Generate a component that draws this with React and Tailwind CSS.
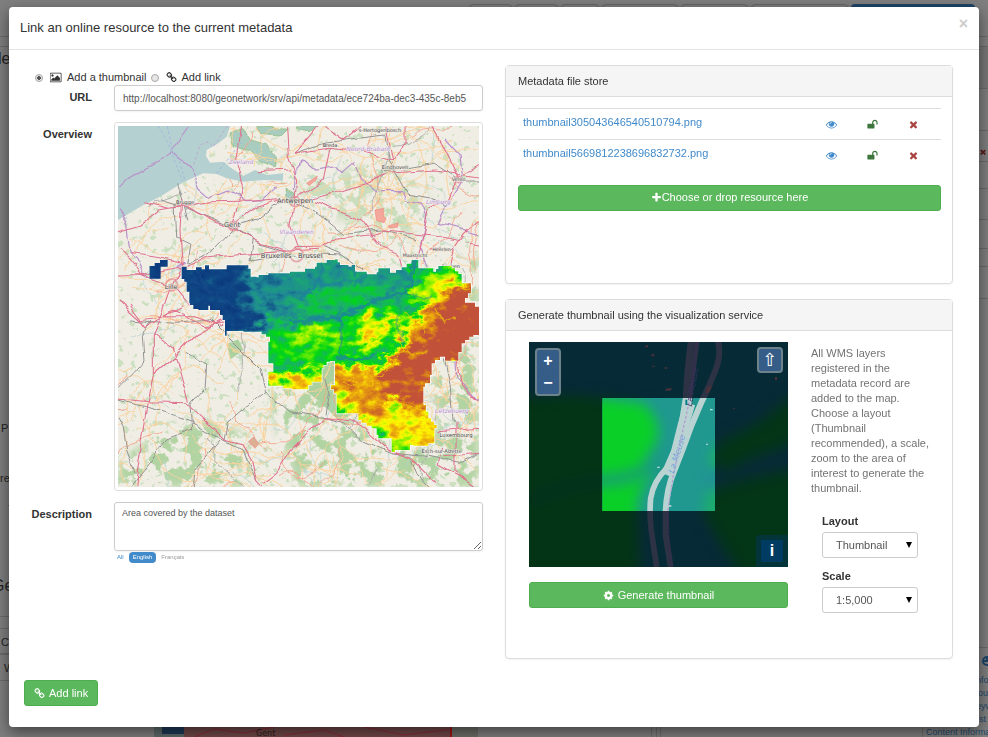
import { useState } from "react";

const ICONS = {
  times:
    "M1490 1322q0 40-28 68l-136 136q-28 28-68 28t-68-28l-294-294-294 294q-28 28-68 28t-68-28l-136-136q-28-28-28-68t28-68l294-294-294-294q-28-28-28-68t28-68l136-136q28-28 68-28t68 28l294 294 294-294q28-28 68-28t68 28l136 136q28 28 28 68t-28 68l-294 294 294 294q28 28 28 68z",
  eye: "M1664 960q-152-236-381-353 61 104 61 225 0 185-131.5 316.5t-316.5 131.5-316.5-131.5-131.5-316.5q0-121 61-225-229 117-381 353 133 205 333.5 326.5t434.5 121.5 434.5-121.5 333.5-326.5zm-720-384q0-20-14-34t-34-14q-125 0-214.5 89.5t-89.5 214.5q0 20 14 34t34 14 34-14 14-34q0-86 61-147t147-61q20 0 34-14t14-34zm848 384q0 34-20 69-140 230-376.5 368.5t-499.5 138.5-499.5-139-376.5-368q-20-35-20-69t20-69q140-229 376.5-368t499.5-139 499.5 139 376.5 368q20 35 20 69z",
  plus: "M1600 736v192q0 40-28 68t-68 28h-416v416q0 40-28 68t-68 28h-192q-40 0-68-28t-28-68v-416h-416q-40 0-68-28t-28-68v-192q0-40 28-68t68-28h416v-416q0-40 28-68t68-28h192q40 0 68 28t28 68v416h416q40 0 68 28t28 68z",
  cog: "M1152 896q0-106-75-181t-181-75-181 75-75 181 75 181 181 75 181-75 75-181zm512-109v222q0 12-8 23t-20 13l-185 28q-19 54-39 91 35 50 107 138 10 12 10 25t-9 23q-27 37-99 108t-94 71q-12 0-26-9l-138-108q-44 23-91 38-16 136-29 186-7 28-36 28h-222q-14 0-24.5-8.5t-11.5-21.5l-28-184q-49-16-90-37l-141 107q-10 9-25 9-14 0-25-11-126-114-165-168-7-10-7-23 0-12 8-23 15-21 51-66.5t54-70.5q-27-50-41-99l-183-27q-13-2-21-12.5t-8-23.5v-222q0-12 8-23t19-13l186-28q14-46 39-92-40-57-107-138-10-12-10-24 0-10 9-23 26-36 98.5-107.5t94.5-71.5q13 0 26 10l138 107q44-23 91-38 16-136 29-186 7-28 36-28h222q14 0 24.5 8.5t11.5 21.5l28 184q49 16 90 37l142-107q9-9 24-9 13 0 25 10 129 119 165 170 7 8 7 22 0 12-8 23-15 21-51 66.5t-54 70.5q26 50 41 98l183 28q13 2 21 12.5t8 23.5z",
  unlock:
    "M1728 576v256q0 26-19 45t-45 19h-64q-26 0-45-19t-19-45v-256q0-106-75-181t-181-75-181 75-75 181v192h96q40 0 68 28t28 68v576q0 40-28 68t-68 28h-960q-40 0-68-28t-28-68v-576q0-40 28-68t68-28h672v-192q0-185 131.5-316.5t316.5-131.5 316.5 131.5 131.5 316.5z",
  picture:
    "M576 576q0 80-56 136t-136 56-136-56-56-136 56-136 136-56 136 56 56 136zm1024 384v448h-1408v-192l320-320 160 160 512-512zm96-704h-1600q-13 0-22.5 9.5t-9.5 22.5v1216q0 13 9.5 22.5t22.5 9.5h1600q13 0 22.5-9.5t9.5-22.5v-1216q0-13-9.5-22.5t-22.5-9.5zm160 32v1216q0 66-47 113t-113 47h-1600q-66 0-113-47t-47-113v-1216q0-66 47-113t113-47h1600q66 0 113 47t47 113z",
  link: "M1520 1216q0-40-28-68l-208-208q-28-28-68-28-42 0-72 32 3 3 19 18.5t21.5 21.5 15 19 13 25.5 3.5 27.5q0 40-28 68t-68 28q-15 0-27.5-3.5t-25.5-13-19-15-21.5-21.5-18.5-19q-33 31-33 73 0 40 28 68l206 207q27 27 68 27 40 0 68-26l147-146q28-28 28-67zm-703-705q0-40-28-68l-206-207q-28-28-68-28-39 0-68 27l-147 146q-28 28-28 67 0 40 28 68l208 208q27 27 68 27 42 0 72-31-3-3-19-18.5t-21.5-21.5-15-19-13-25.5-3.5-27.5q0-40 28-68t68-28q15 0 27.5 3.5t25.5 13 19 15 21.5 21.5 18.5 19q33-31 33-73zm895 705q0 120-85 203l-147 146q-83 83-203 83-121 0-204-85l-206-207q-83-83-83-203 0-123 88-209l-88-88q-86 88-208 88-120 0-204-84l-208-208q-84-84-84-204t85-203l147-146q83-83 203-83 121 0 204 85l206 207q83 83 83 203 0 123-88 209l88 88q86-88 208-88 120 0 204 84l208 208q84 84 84 204z",
};

function Icon({ name, className }) {
  const wide = name === "picture";
  return (
    <svg viewBox={wide ? "0 0 1920 1792" : "0 0 1792 1792"} className={className} fill="currentColor" aria-hidden="true">
      <path d={ICONS[name]} />
    </svg>
  );
}

// small seeded generator, keeps the minor roads stable between renders
function seeded(seed) {
  let s = seed;
  return () => {
    s = (s * 16807) % 2147483647;
    return s / 2147483647;
  };
}

function wander(rand, length, step) {
  let x = 24 + rand() * 1083;
  let y = 18 + rand() * 1083;
  let angle = rand() * Math.PI * 2;
  let d = `M${x.toFixed(0)} ${y.toFixed(0)}`;
  for (let i = 0; i < length; i++) {
    angle += (rand() - 0.5) * 0.9;
    x += Math.cos(angle) * step;
    y += Math.sin(angle) * step;
    d += `L${x.toFixed(0)} ${y.toFixed(0)}`;
  }
  return d;
}

function network(seed, count, length, step) {
  const rand = seeded(seed);
  let d = "";
  for (let i = 0; i < count; i++) d += wander(rand, length, step);
  return d;
}

// raster coverage has blocky edges: walk each segment in cells
function blocky(points, cell) {
  let d = `M${points[0][0]} ${points[0][1]}`;
  for (let i = 0; i < points.length; i++) {
    const [x0, y0] = points[i];
    const [x1, y1] = points[(i + 1) % points.length];
    const n = Math.max(1, Math.round(Math.min(Math.abs(x1 - x0), Math.abs(y1 - y0)) / cell));
    for (let k = 1; k <= n; k++) {
      d += `H${Math.round(x0 + ((x1 - x0) * k) / n)}V${Math.round(y0 + ((y1 - y0) * k) / n)}`;
    }
  }
  return d + "Z";
}

const COVERAGE = blocky(
  [
    [215, 440], [230, 450], [258, 442], [275, 448], [285, 436], [297, 448], [345, 448], [350, 436], [388, 436],
    [415, 446], [422, 470], [440, 472], [446, 465], [475, 460], [540, 455], [585, 446], [615, 440], [620, 428],
    [650, 420], [675, 418], [690, 435], [715, 440], [725, 435], [735, 455], [770, 463], [800, 457], [805, 445],
    [840, 458], [875, 442], [905, 420], [923, 420], [925, 445], [970, 455], [985, 438], [1025, 445], [1045, 462],
    [1055, 490], [1083, 495], [1083, 520], [1065, 548], [1095, 560], [1110, 560], [1110, 645], [1090, 650],
    [1065, 670], [1045, 722], [1005, 710], [975, 730], [965, 765], [960, 790], [945, 800], [940, 855], [955, 895],
    [980, 925], [973, 970], [955, 977], [910, 975], [900, 990], [865, 990], [855, 997], [845, 985], [845, 955],
    [805, 945], [800, 925], [755, 900], [745, 880], [680, 873], [680, 820], [663, 795], [675, 755], [675, 723],
    [660, 725], [640, 745], [635, 785], [605, 795], [595, 808], [545, 805], [520, 797], [475, 795], [475, 755],
    [490, 745], [490, 730], [475, 720], [475, 665], [480, 650], [455, 635], [400, 633], [350, 647], [345, 600],
    [330, 570], [300, 557], [295, 570], [265, 567], [250, 555], [240, 550], [238, 515], [230, 485], [215, 468],
  ],
  10
);

const MOTORWAYS = [
  "M24 335L90 315L150 270L220 258L300 245L430 243L520 235L570 240",
  "M100 245L180 265L225 260L300 300L370 330L450 370L530 390",
  "M365 320L440 262L520 235", "M395 18L380 120L400 200L385 260L365 320",
  "M215 240L210 330L216 430L185 500L150 600L130 645L130 765L115 845L80 1065L78 1101",
  "M24 385L60 420L90 460L150 480L190 500L240 560", "M24 462L120 460L215 440L300 410L400 400L540 390L630 385",
  "M60 400L150 415L215 430", "M24 838L70 840L115 845L230 848L290 905L345 960L400 975L425 1020L440 1085L455 1101",
  "M130 640L190 685L210 755L235 845", "M130 765L200 705L260 645L340 600", "M24 540L90 600L160 590L220 560",
  "M160 590L260 590L330 620", "M60 555L110 620L190 570L290 620L345 610",
  "M555 245L615 235L690 215L770 190L835 160L975 150L1107 168",
  "M965 18L995 70L1045 170L1015 240L955 270L930 390L920 420", "M555 100L600 50L625 18",
  "M555 100L655 85L755 95L845 120L885 70L885 18", "M825 18L845 120",
  "M555 380L635 378L675 355L785 345L825 333L985 350L1107 372", "M615 245L755 300L815 380L865 400L875 440",
  "M555 245L540 310L565 380", "M1045 170L1107 130", "M960 390L1030 385L1060 340L1107 300", "M1030 385L1020 440",
  "M555 985L605 930L645 890L725 900L765 925L845 995L905 1015L975 1085", "M985 935L1107 925",
  "M995 980L985 1035L1075 1085", "M1035 905L1035 1055L1100 1101", "M1105 845L1055 795L1037 695",
  "M570 965L545 990L500 1060L460 1090", "M555 235L640 180L660 85", "M530 18L535 110L560 180L555 245",
  "M440 155L540 150", "M1000 1010L1107 1000", "M640 20L700 60L750 20",
].join("");

const RAILWAYS = [
  "M150 240L220 262L370 325L450 372L540 400", "M195 250L200 350L240 370L230 430L300 400L370 325L440 300L520 235",
  "M200 190L215 240L230 300", "M125 600L100 650L105 720L70 760L24 805", "M24 840L110 860L240 905L330 955L400 990L440 1085",
  "M240 850L245 930L170 960L90 1060L60 1101", "M60 600L200 610L300 600L400 700L450 750L467 815L540 875",
  "M345 960L355 910L467 815", "M330 960L255 1050L250 1101", "M290 735L230 700M290 735L285 800L240 850",
  "M555 100L640 70L740 55L825 45L835 120L890 220L960 230L1010 260", "M555 250L640 290L700 340L815 330L915 360",
  "M825 155L970 130L1050 180L1107 180", "M540 875L645 890L700 905L755 960L850 1000L960 1010L1050 1030L1107 1000",
  "M645 880L655 830L640 780", "M905 1020L920 1060L955 1101", "M1003 715L1020 800L1030 905", "M375 330L430 360L420 420L540 400",
  "M24 890L40 920L50 990L75 1060", "M570 400L700 405L760 450M700 405L640 380",
].join("");

const BORDERS = [
  "M24 205L60 170L90 150L150 120L185 95L240 18", "M185 95L240 140L270 205L300 230L350 210L390 230L410 245L455 243L500 200",
  "M24 275L50 310L60 400L80 420L100 460L115 470", "M555 140L585 120L620 150L675 140L695 160L735 125L755 180L795 215L875 215L885 240L935 250L950 290L930 380L955 440",
  "M1005 60L1050 110L1060 180L1010 260L985 310L1107 340", "M1037 695L1040 770L1107 845", "M200 440L225 425", "M550 210L555 140",
].join("");

const PLACES = [
  [225, 251, 15, "Brugge"], [183, 508, 19, "Lille"], [366, 321, 20, "Gent"], [555, 248, 20, "Antwerpen"],
  [545, 413, 20, "Bruxelles - Brussel"], [808, 36, 15, "'s-Hertogenbosch"], [660, 81, 15, "Breda"],
  [855, 148, 15, "Eindhoven"], [1046, 182, 15, "Venlo"], [995, 394, 14, "Heerlen"], [915, 410, 14, "Maastricht"],
  [1022, 443, 15, "Aachen"], [1038, 950, 16, "Luxembourg"], [995, 999, 15, "Esch-sur-Alzette"],
];

const REGIONS = [
  [393, 131, "Zeeland"], [775, 94, "Noord-Brabant"], [985, 252, "Limburg"], [560, 342, "Vlaanderen"], [1026, 880, "Lëtzebuerg"],
];

function OverviewMap() {
  return (
    <svg viewBox="24 18 1083 1083" className="block w-full" role="img" aria-label="Overview of the area">
      <defs>
        <clipPath id="coverage">
          <path d={COVERAGE + blocky([[118, 438], [150, 420], [173, 420], [173, 440], [152, 455], [152, 476], [120, 476]], 12)} />
        </clipPath>
        <clipPath id="land">
          <path d="M24 305L150 235L240 182L320 165L400 190L520 185L500 150L340 120L290 100L370 18H1107V1101H24Z" />
        </clipPath>
        <filter id="woods" x="-5%" y="-5%" width="110%" height="110%" colorInterpolationFilters="sRGB">
          <feTurbulence type="fractalNoise" baseFrequency="0.022" numOctaves="5" seed="8" />
          <feColorMatrix values="0 0 0 0 .7  0 0 0 0 .83  0 0 0 0 .64  14 0 0 0 -7" result="n" />
          <feGaussianBlur in="SourceAlpha" stdDeviation="14" result="b" />
          <feComposite in="n" in2="b" operator="in" />
        </filter>
        <filter id="copses" x="0" y="0" width="100%" height="100%" colorInterpolationFilters="sRGB">
          <feTurbulence type="fractalNoise" baseFrequency="0.05" numOctaves="3" seed="21" />
          <feColorMatrix values="0 0 0 0 .74  0 0 0 0 .86  0 0 0 0 .7  12 0 0 0 -7.4" />
        </filter>
        <filter id="rough" x="24" y="18" width="1083" height="1083" filterUnits="userSpaceOnUse">
          <feTurbulence type="fractalNoise" baseFrequency="0.016" numOctaves="2" seed="4" />
          <feDisplacementMap in="SourceGraphic" scale="24" xChannelSelector="R" yChannelSelector="G" />
        </filter>
        <filter id="relief" filterUnits="userSpaceOnUse" x="-60" y="-60" width="1300" height="1300" colorInterpolationFilters="sRGB">
          <feGaussianBlur in="SourceGraphic" stdDeviation="13" result="base" />
          <feTurbulence type="fractalNoise" baseFrequency="0.024 0.036" numOctaves="5" seed="11" result="noise" />
          <feDisplacementMap in="base" in2="noise" scale="90" xChannelSelector="R" yChannelSelector="G" result="warped" />
          <feColorMatrix in="noise" values="0 0 1 0 0  0 0 1 0 0  0 0 1 0 0  0 0 0 0 1" result="grain" />
          <feComposite in="warped" in2="grain" operator="arithmetic" k1="0.45" k2="0.79" k3="0.12" k4="-0.08" />
          <feComponentTransfer>
            <feFuncR type="table" tableValues=".04 .06 .12 .1 0 .5 1 .93 .85 .76 .76" />
            <feFuncG type="table" tableValues=".2 .28 .54 .7 .84 .94 .98 .68 .5 .32 .32" />
            <feFuncB type="table" tableValues=".48 .52 .58 .4 .08 0 0 .05 .1 .22 .22" />
            <feFuncA type="linear" slope="0" intercept="1" />
          </feComponentTransfer>
        </filter>
        <filter id="stream" x="24" y="18" width="1083" height="1083" filterUnits="userSpaceOnUse" colorInterpolationFilters="sRGB">
          <feTurbulence type="fractalNoise" baseFrequency="0.04" numOctaves="3" seed="6" />
          <feDisplacementMap in="SourceGraphic" scale="34" xChannelSelector="R" yChannelSelector="G" />
          <feGaussianBlur stdDeviation="2" />
        </filter>
      </defs>

      <rect x="24" y="18" width="1083" height="1083" fill="#f0ede5" />
      <rect x="24" y="18" width="1083" height="1083" filter="url(#copses)" opacity="0.7" />
      <g filter="url(#woods)">
        <path d="M24 1030L170 920L300 900L420 950L430 1101H24Z" />
        <path d="M500 800L660 720L700 880L860 1000L1107 1101V1050L900 1060L700 1101H560L480 850Z" />
        <path d="M960 780L1107 640V1101H640L560 900L800 940L990 930Z" />
        <path d="M1030 450L1107 400V600L1070 560Z" />
      </g>
      <g filter="url(#woods)" opacity="0.6">
        <path d="M560 200L800 120L960 230L900 350L620 280Z" />
      </g>
      <path d="M620 745L675 720L670 800L735 875L690 905L635 850L590 815Z" fill="#add19e" />
      <path d="M350 672L385 658L400 690L362 718Z" fill="#add19e" />

      <path
        d="M24 18H360L350 50L325 70L290 90L288 108L300 128L340 125L358 140L400 168L435 150L470 165L520 160L518 182L460 180L400 185L350 175L320 162L280 160L240 178L215 190L150 230L100 255L24 300Z"
        fill="#b5d0d0"
      />
      <g filter="url(#rough)" fill="#a9ccc0" stroke="#9cc48d" strokeWidth="3">
        <path d="M360 45L400 28L420 60L470 72L500 110L495 145L450 125L415 90L365 70Z" />
        <path d="M440 20L530 25L510 45L450 40Z" />
        <path d="M555 18H630L600 35L570 30Z" />
        <path d="M525 205L555 220L545 255L530 240Z" />
      </g>

      <g fill="none" filter="url(#rough)">
        <path d={network(77, 60, 12, 12)} stroke="#b4d2d2" strokeWidth="2" clipPath="url(#land)" />
        <g clipPath="url(#land)">
          <path d={network(13, 210, 16, 15)} stroke="#fbd29b" strokeWidth="3" opacity="0.9" />
          <path d={network(345, 34, 14, 14)} stroke="#f3a488" strokeWidth="2.6" />
          <path d={network(990, 14, 14, 15)} stroke="#aaa" strokeWidth="2.6" />
        </g>
        <path d={RAILWAYS} stroke="#939393" strokeWidth="3" />
        <path d={BORDERS} stroke="#b992cb" strokeWidth="3.6" />
        <path d={MOTORWAYS} stroke="#e0728f" strokeWidth="3.2" />
      </g>
      <g fill="none" stroke="#9fb4de" strokeWidth="2.6" strokeDasharray="9 7">
        <path d="M145 18L175 70L195 125L217 182" />
        <path d="M172 18L185 80L210 130L226 185" />
        <path d="M320 160L360 110L400 60" />
        <path d="M352 18L310 80L295 65L270 75L250 138" stroke="#b9a5cf" />
      </g>
      <g fill="#f4a79a" stroke="#e88b80" strokeWidth="2">
        <path d="M795 270L820 265V290L828 295L822 308L800 302Z" />
        <path d="M835 318L865 308L862 322L838 324Z" />
        <path d="M590 190L622 168L618 180L598 196Z" />
        <path d="M415 965L432 950L445 972L435 985Z" fill="#dcae94" />
      </g>
      <g fill="none" stroke="#e48c96" strokeWidth="5" opacity="0.7">
        <circle cx="555" cy="245" r="15" />
        <circle cx="560" cy="405" r="20" />
        <circle cx="370" cy="318" r="14" />
        <circle cx="185" cy="495" r="18" />
        <circle cx="1045" cy="178" r="10" />
      </g>

      <g fontFamily='"DejaVu Sans", sans-serif' textAnchor="middle">
        {PLACES.map(([x, y, size, name]) => (
          <text key={name} x={x} y={y} fontSize={size} fill="#444" stroke="#f0ede5" strokeWidth="3" paintOrder="stroke">
            {name}
          </text>
        ))}
        {REGIONS.map(([x, y, name]) => (
          <text key={name} x={x} y={y} fontSize="18" fontStyle="italic" fill="#b48fc8" stroke="#f4eff4" strokeWidth="3" paintOrder="stroke">
            {name}
          </text>
        ))}
      </g>

      <path d={COVERAGE} fill="none" stroke="#fff" strokeWidth="5" opacity="0.7" />
      <g clipPath="url(#coverage)">
        <g filter="url(#relief)">
          <rect x="-60" y="-60" width="1300" height="1300" fill="#4a4a4a" />
          <path d="M340 400H580L580 580L470 650L350 680L330 600L400 560L350 520Z" fill="#363636" />
          <path d="M60 380H350L390 470L380 560L470 580L460 610L330 650L60 600Z" fill="#181818" />
          <path d="M200 400H400L420 530L380 560H240Z" fill="#1a1a1a" />
          <path d="M560 400H920L890 510L700 560L520 570Z" fill="#404040" />
          <path d="M600 520L700 500L860 480L840 520L720 560L580 580Z" fill="#5c5c5c" />
          <path d="M470 610L700 590L870 550L910 600L800 730L470 730Z" fill="#6a6a6a" />
          <path d="M710 690L770 600L860 570L850 620L790 690Z" fill="#9e9e9e" />
          <path d="M530 690L560 640L660 620L670 660Z" fill="#8e8e8e" />
          <path d="M460 770L560 755L650 745L660 830H460Z" fill="#a8a8a8" />
          <path d="M930 440L1050 440L1060 500L960 570L900 540Z" fill="#8a8a8a" />
          <path d="M870 640L940 570L1020 500L1200 480V760L940 720L900 760Z" fill="#c4c4c4" />
          <path d="M990 570L1060 490L1240 480V760L1000 720L960 650Z" fill="#fff" />
          <path d="M810 740L850 710L890 660L960 650L1000 730L960 860L860 850L810 820Z" fill="#ececec" />
          <path d="M660 750L800 730L840 870L960 850L980 900L740 900L660 860Z" fill="#c0c0c0" />
          <path d="M650 790L690 780L700 830L660 830Z" fill="#d0d0d0" />
          <path d="M740 885L1000 870V1010H840L800 950Z" fill="#a6a6a6" />
          <path d="M790 915L850 940L920 965L890 985L850 1010L800 960Z" fill="#838383" />
          <path d="M670 820L730 840L740 880L670 860Z" fill="#8c8c8c" />
          <path d="M690 690L780 700L830 660L850 690L790 740L690 730Z" fill="#525252" />
        </g>
        <g fill="none" stroke="#1f7fa0" filter="url(#stream)">
          <path d="M915 410L898 500L885 515L805 540L735 570L690 590L600 600L540 610" strokeWidth="12" opacity="0.75" />
          <path d="M686 570L692 640L690 710L760 715L800 700" strokeWidth="9" opacity="0.6" />
          <path d="M640 420L625 480L600 510L575 540M625 480L660 500" strokeWidth="9" opacity="0.75" />
          <path d="M715 435L745 470M770 460L730 500" strokeWidth="7" opacity="0.6" />
          <path d="M885 515L915 530L960 535" strokeWidth="7" opacity="0.5" />
          <path d="M870 560L865 620L880 670" strokeWidth="7" opacity="0.45" />
          <path d="M230 480L300 510L370 560L430 570M260 450L300 520M390 440L360 500" stroke="#174f8a" strokeWidth="7" opacity="0.6" />
        </g>
        <g fill="none" stroke="#f5cf00" strokeWidth="5" opacity="0.6" filter="url(#stream)">
          <path d="M860 660L900 700L950 700M870 690L840 750L800 770M960 600L920 620L890 580M975 560L1000 600L1040 590M930 590L950 640" />
          <path d="M700 780L740 800L790 790M820 860L870 850L930 870M860 900L830 870" />
        </g>
      </g>
    </svg>
  );
}

const RIVER_WEST = "M512 20Q500 110 497 189L487 250Q480 320 440 400Q400 440 392 490Q388 530 393 580L410 696";
const RIVER_EAST = "M594 20Q605 60 585 110Q565 160 545 200L515 270Q490 340 462 410Q440 460 437 528L437 600L452 696";

function RiverLayer({ inside }) {
  return (
    <>
      <rect x="27" y="21" width="777" height="675" fill={inside ? "#209890" : "#072a37"} />
      <g filter="url(#soft)">
        <path
          d="M-20 190L170 180Q260 190 370 205Q440 270 400 340Q340 400 400 420Q350 460 352 530L360 720H-20Z"
          fill={inside ? "#0acf27" : "#033415"}
        />
        <path d="M830 170L720 260L600 320L565 380L620 410L830 320Z" fill={inside ? "#1cb45f" : "#033517"} />
        <path d="M830 400L640 440L560 470L550 540Q600 620 660 720H830Z" fill={inside ? "#1cad6c" : "#033517"} />
        <path
          d="M20 500Q170 440 250 436Q340 436 440 370"
          fill="none"
          stroke={inside ? "#1a9880" : "#032c2c"}
          strokeWidth="30"
          opacity={inside ? 1 : 0.5}
        />
        <path d="M560 440Q620 430 690 385Q760 360 820 345" fill="none" stroke={inside ? "#2386a0" : "#062b38"} strokeWidth="28" opacity="0.8" />
      </g>
      <g fill="none" stroke={inside ? "#b9d3d2" : "#2d3344"}>
        <path d={RIVER_WEST} strokeWidth="17" />
        <path d={RIVER_EAST} strokeWidth="18" />
        <path d="M530 20L512 150L505 215" strokeWidth="18" />
        <path d="M509 206L490 270L470 350L440 420" strokeWidth="34" visibility={inside ? "visible" : "hidden"} />
        <path d="M530 21L512 180L490 280L462 410L443 528L448 640L456 696" stroke={inside ? "#b49fd0" : "#3a2b55"} strokeWidth="4" strokeDasharray="9 5" />
      </g>
    </>
  );
}

function ThumbnailMap() {
  return (
    <div className="relative">
      <svg viewBox="27 21 777 675" className="block w-full" role="img" aria-label="Thumbnail area">
        <defs>
          <filter id="soft" x="-10%" y="-10%" width="120%" height="120%" colorInterpolationFilters="sRGB">
            <feGaussianBlur stdDeviation="19" />
          </filter>
          <clipPath id="frame">
            <rect x="247" y="189" width="338" height="339" />
          </clipPath>
        </defs>
        <RiverLayer />
        <g clipPath="url(#frame)">
          <RiverLayer inside />
        </g>
        <g fontFamily='"DejaVu Sans", sans-serif' fontSize="25" fontStyle="italic">
          <text transform="translate(462 416) rotate(-73)" fill="#7fa6dc">
            La Meuse
          </text>
          <text transform="translate(515 215) rotate(-80)" fill="#37335e">
            La Meuse
          </text>
        </g>
        <g fill="#4a3038">
          <path d="M376 31h8v6h-8zM394 58h9v6h-9zM397 92h7v4h-7zM434 96h6v6h-6zM436 162l18-4v8l-16 2zM560 158l14-8v10l-8 14h-8zM765 126h6v9h-6zM757 108h7v5h-7zM640 218h5v4h-5z" />
        </g>
        <g fill="#bfe3dd">
          <path d="M570 222h8v4h-8zM558 326h6v3h-6zM412 395h7v4h-7zM446 511h8v4h-8z" />
        </g>
        <path d="M496 194h6v16h-6z" fill="#0b7d86" />
      </svg>

      <div className="absolute left-[6px] top-[6px] flex flex-col rounded-sm border-2 border-[#6d838c] bg-[#365d88] text-base font-bold text-white">
        <button type="button" aria-label="Zoom in" className="h-[22px] w-[22px] leading-5">+</button>
        <button type="button" aria-label="Zoom out" className="h-[22px] w-[22px] leading-5">−</button>
      </div>
      <button
        type="button"
        aria-label="Reset rotation"
        className="absolute right-[5px] top-[5px] size-[26px] rounded-sm border-2 border-[#6d838c] bg-[#365d88] font-['DejaVu_Sans',sans-serif] text-lg leading-5 text-white"
      >
        ⇧
      </button>
      <div className="absolute bottom-0 right-0 rounded-tl bg-[#03343a] p-[5px]">
        <button type="button" aria-label="Attributions" className="block size-[22px] bg-[#003c61] text-base font-bold leading-5 text-white">
          i
        </button>
      </div>
    </div>
  );
}

function Panel({ title, className, children }) {
  return (
    <section className={`rounded-sm border border-[#ddd] bg-white shadow-xs ${className}`}>
      <h2 className="border-b border-[#ddd] bg-[#f5f5f5] px-3 py-2 leading-[14px]">{title}</h2>
      {children}
    </section>
  );
}

function FileStore() {
  const files = ["thumbnail305043646540510794.png", "thumbnail5669812238696832732.png"];
  return (
    <Panel title="Metadata file store" className="min-h-[219px]">
      <div className="pl-3 pr-[11px] pt-[11px]">
        <table className="w-full">
          <tbody>
            {files.map((file) => (
              <tr key={file} className="h-[31px] border-t border-[#ddd]">
                <td className="pb-1 pl-[5px]">
                  <a href="#file" className="text-[#428bca]">{file}</a>
                </td>
                <td className="w-[41px]">
                  <button type="button" aria-label="View" className="block text-[#428bca]">
                    <Icon name="eye" className="size-[11px]" />
                  </button>
                </td>
                <td className="w-[41px]">
                  <button type="button" aria-label="Unlock" className="block text-[#3c763d]">
                    <Icon name="unlock" className="size-[11px]" />
                  </button>
                </td>
                <td className="w-[33px]">
                  <button type="button" aria-label="Delete" className="block text-[#a94442]">
                    <Icon name="times" className="size-[11px]" />
                  </button>
                </td>
              </tr>
            ))}
          </tbody>
        </table>
        <button
          type="button"
          className="mt-[14px] flex h-[26px] w-full items-center justify-center rounded-[3px] border border-[#4cae4c] bg-[#5cb85c] text-white"
        >
          <Icon name="plus" className="size-[11px]" />
          Choose or drop resource here
        </button>
      </div>
    </Panel>
  );
}

function SelectField({ id, label, options }) {
  return (
    <div>
      <label htmlFor={id} className="mb-[3px] block font-bold leading-[15px]">{label}</label>
      <div className="relative">
        <select id={id} className="h-[26px] w-full appearance-none rounded-[3px] border border-[#ccc] bg-white pl-[13px] text-[#555]">
          {options.map((option) => (
            <option key={option}>{option}</option>
          ))}
        </select>
        <svg viewBox="0 0 6 6" className="pointer-events-none absolute right-[6px] top-[10px] size-[6px]" aria-hidden="true">
          <path d="M0 0H6L3 6Z" />
        </svg>
      </div>
    </div>
  );
}

function ThumbnailMaker() {
  return (
    <Panel title="Generate thumbnail using the visualization service" className="min-h-[360px]">
      <div className="flex gap-[23px] pl-[23px] pr-5 pt-[11px]">
        <div className="min-w-0 flex-1">
          <ThumbnailMap />
          <button
            type="button"
            className="mt-[15px] flex h-[26px] w-full items-center justify-center gap-1 rounded-[3px] border border-[#4cae4c] bg-[#5cb85c] text-white"
          >
            <Icon name="cog" className="size-[11px]" />
            Generate thumbnail
          </button>
        </div>
        <div className="w-[121px] pt-1">
          <p className="leading-[15px] text-[#737373]">
            All WMS layers registered in the metadata record are added to the map. Choose a layout (Thumbnail
            recommended), a scale, zoom to the area of interest to generate the thumbnail.
          </p>
          <div className="mt-[18px] space-y-[11px] pl-[11px] pr-[14px]">
            <SelectField id="layout" label="Layout" options={["Thumbnail", "A4 landscape"]} />
            <SelectField id="scale" label="Scale" options={["1:5,000", "1:10,000"]} />
          </div>
        </div>
      </div>
    </Panel>
  );
}

const radio =
  "size-2 appearance-none rounded-full border border-[#a8a8a8] bg-[#e6e6e6] checked:bg-[radial-gradient(circle,#555_0_2px,#e6e6e6_2px)]";

function LinkForm() {
  const [kind, setKind] = useState("thumbnail");
  return (
    <form className="grid grid-cols-[68px_1fr] gap-x-[22px]">
      <div className="col-span-2 flex h-[15px] items-center gap-1 pl-[11px] leading-[15px]">
        <label className="flex items-center">
          <input type="radio" name="kind" className={radio} checked={kind === "thumbnail"} onChange={() => setKind("thumbnail")} />
          <Icon name="picture" className="ml-[7px] mr-[5px] h-[11px] w-[12px]" />
          Add a thumbnail
        </label>
        <label className="flex items-center">
          <input type="radio" name="kind" className={radio} checked={kind === "link"} onChange={() => setKind("link")} />
          <Icon name="link" className="ml-[7px] mr-[5px] size-[11px]" />
          Add link
        </label>
      </div>

      <label htmlFor="url" className="pt-[5px] text-right font-bold leading-[15px]">URL</label>
      <input
        id="url"
        type="text"
        defaultValue="http://localhost:8080/geonetwork/srv/api/metadata/ece724ba-dec3-435c-8eb5"
        className="h-[26px] w-full rounded-[3px] border border-[#ccc] px-2 text-[10px] text-[#555] shadow-xs"
      />

      <div className="mt-[16px] text-right font-bold leading-[15px]">Overview</div>
      <div className="mt-[11px] rounded-[3px] border border-[#ddd] p-[3px]">
        <OverviewMap />
      </div>

      <label htmlFor="description" className="mt-[16px] text-right font-bold leading-[15px]">Description</label>
      <div className="mt-[11px]">
        <textarea
          id="description"
          defaultValue="Area covered by the dataset"
          className="block h-[49px] w-full rounded-[3px] border border-[#ccc] px-[7px] py-1 text-[9px] leading-3 text-[#555] shadow-xs"
        />
        <div className="mt-px flex h-[11px] items-center gap-[5px] pl-[3px] text-[6px] leading-[11px] text-[#999]">
          <a href="#all" className="text-[#428bca]">All</a>
          <a href="#en" className="rounded-sm bg-[#428bca] px-1 text-white">English</a>
          <a href="#fr">Français</a>
        </div>
      </div>
    </form>
  );
}

// the dimmed editor page, seen only around the edges of the dialog
function EditorPage() {
  return (
    <div className="absolute inset-0 flex flex-col overflow-hidden bg-[#7f7f7f] text-[11px] text-[#222]">
      <div className="flex h-[7px] items-start justify-end gap-[3px] pr-[13px] pt-1">
        {["w-[43px]", "w-[43px]", "w-[38px]", "w-[76px]", "w-[67px]", "w-[97px]"].map((width, i) => (
          <span key={i} className={`h-6 rounded-sm border border-[#666] ${width}`} />
        ))}
        <span className="h-6 w-[124px] rounded-sm bg-[#1d4569]" />
      </div>
      <div className="flex flex-1 justify-between">
        <div className="w-6 whitespace-nowrap">
          <div className="mt-[29px] h-[11px] border-y border-[#6b6b6b]" />
          <div className="-ml-[2px] h-5 text-base leading-6">le</div>
          <div className="mt-[354px] h-[14px] pl-px leading-[14px]">P</div>
          <div className="mt-[36px] h-[14px] leading-[14px]">re</div>
          <div className="mt-[12px] h-[14px] pl-2 leading-[14px]">-</div>
          <div className="-ml-2 mt-[65px] h-5 text-base leading-5">Ge</div>
          <div className="mt-[20px] h-[13px] border-y border-[#6b6b6b]" />
          <div className="h-[26px] border-b-2 border-[#6b6b6b] pl-px leading-[26px]">C</div>
          <div className="h-[26px] border-b border-[#6b6b6b] pl-1 leading-[26px]">W</div>
        </div>
        <div className="w-[9px] whitespace-nowrap text-[9px] text-[#24496a]">
          <div className="mt-[29px] h-[11px] border-y border-[#6b6b6b]" />
          <div className="h-[42px] border-b border-[#6b6b6b] bg-[#777]" />
          <div className="h-[42px] border-b border-[#6b6b6b]" />
          <div className="flex h-[31px] items-center border-b border-[#6b6b6b] pt-3 text-[#5a1c1c]">
            <Icon name="times" className="size-2" />
          </div>
          <div className="h-[27px] border-b border-[#6b6b6b]" />
          <div className="mt-[30px] h-[30px] border-y border-[#6b6b6b]" />
          <div className="mt-[17px] h-[33px] border-y border-[#6b6b6b]" />
          <div className="mt-[348px] border-t border-[#6b6b6b] pb-2 pl-[3px] pt-2">
            <svg viewBox="0 0 10 10" className="size-[10px]" aria-hidden="true">
              <circle cx="5" cy="5" r="4" fill="none" stroke="#1d4569" strokeWidth="2" />
              <path d="M2 5H8M5 2V5" stroke="#1d4569" strokeWidth="2" />
            </svg>
          </div>
          <div className="-ml-[3px] leading-[13px]">nfo</div>
          <div className="-ml-px leading-[13px]">ou</div>
          <div className="-ml-[3px] leading-[13px]">eyw</div>
          <div className="leading-[13px]">st</div>
        </div>
      </div>
      <div className="flex h-[10px] pl-[154px] text-[9px] leading-[10px]">
        <svg viewBox="0 0 324 10" className="h-[10px] w-[324px]" aria-hidden="true">
          <rect width="324" height="10" fill="#704848" />
          <rect width="30" height="10" fill="#5e6b6b" />
          <rect x="8" width="22" height="7" fill="#1e3a58" />
          <path d="M40 10L60 2L90 6L120 0M130 8L170 3L190 10M210 0L250 8L300 2" stroke="#8a2a35" fill="none" />
          <path d="M297 0V10" stroke="#a01414" strokeWidth="2" />
          <rect x="298" width="26" height="10" fill="#6d6d68" />
          <text x="102" y="9" fontSize="8" fontFamily='"DejaVu Sans", sans-serif' fill="#2c2020">Gent</text>
        </svg>
        <span className="ml-[173px] w-[6px] border-x border-[#6b6b6b]" />
        <span className="w-1 border-r border-[#6b6b6b]" />
        <span className="ml-auto w-[66px] whitespace-nowrap border-l border-[#6b6b6b] pl-[3px] text-[#24496a]">Content Information</span>
      </div>
    </div>
  );
}

export default function App() {
  return (
    <div className="relative min-h-screen overflow-hidden font-['Liberation_Sans',Arial,sans-serif] text-[11px] text-[#333]">
      <EditorPage />
      <div
        role="dialog"
        aria-labelledby="dialog-title"
        className="relative mx-[9px] mb-[10px] mt-[7px] rounded-sm bg-white shadow-[0_5px_15px_rgba(0,0,0,0.5)]"
      >
        <header className="flex items-start justify-between border-b border-[#e5e5e5] px-[11px] pb-3 pt-[11px]">
          <h1 id="dialog-title" className="text-[13px] leading-[19px]">Link an online resource to the current metadata</h1>
          <button type="button" aria-label="Close" className="text-base font-bold leading-3 text-[#ccc]">×</button>
        </header>
        <div className="grid grid-cols-[459fr_448fr] gap-x-[22px] pb-[21px] pl-[15px] pr-[26px] pt-[15px]">
          <div className="pt-[5px]">
            <LinkForm />
          </div>
          <div className="space-y-[15px]">
            <FileStore />
            <ThumbnailMaker />
          </div>
          <div className="col-span-2 mt-[21px]">
            <button
              type="button"
              className="flex h-[26px] items-center gap-1 rounded-[3px] border border-[#4cae4c] bg-[#5cb85c] px-[9px] text-white"
            >
              <Icon name="link" className="size-[11px]" />
              Add link
            </button>
          </div>
        </div>
      </div>
    </div>
  );
}
